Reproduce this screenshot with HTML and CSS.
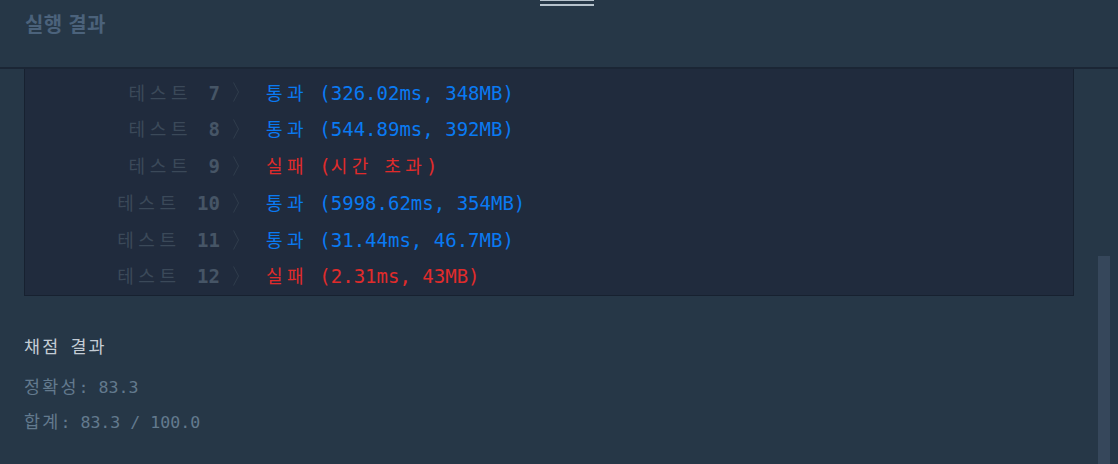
FILE: index.html
```html
<!DOCTYPE html>
<html lang="ko">
<head>
<meta charset="utf-8">
<title>실행 결과</title>
<link rel="stylesheet" href="styles.css">
</head>
<body>
<div class="handle"><span></span><span></span></div>
<header class="header">
  <h2 class="title">실행 결과</h2>
</header>
<main class="scroll">
  <div class="results">
    <div class="row"><span class="label"><span class="ko">테스트</span> <b>7</b></span><svg class="chev" viewBox="0 0 6 20"><polyline points="0.5,0.5 5.5,10 0.5,19.5"/></svg><span class="status pass"><span class="ko">통과</span> (326.02ms, 348MB)</span></div>
    <div class="row"><span class="label"><span class="ko">테스트</span> <b>8</b></span><svg class="chev" viewBox="0 0 6 20"><polyline points="0.5,0.5 5.5,10 0.5,19.5"/></svg><span class="status pass"><span class="ko">통과</span> (544.89ms, 392MB)</span></div>
    <div class="row"><span class="label"><span class="ko">테스트</span> <b>9</b></span><svg class="chev" viewBox="0 0 6 20"><polyline points="0.5,0.5 5.5,10 0.5,19.5"/></svg><span class="status fail"><span class="ko">실패</span> (<span class="ko">시간</span> <span class="ko">초과</span>)</span></div>
    <div class="row"><span class="label"><span class="ko">테스트</span> <b>10</b></span><svg class="chev" viewBox="0 0 6 20"><polyline points="0.5,0.5 5.5,10 0.5,19.5"/></svg><span class="status pass"><span class="ko">통과</span> (5998.62ms, 354MB)</span></div>
    <div class="row"><span class="label"><span class="ko">테스트</span> <b>11</b></span><svg class="chev" viewBox="0 0 6 20"><polyline points="0.5,0.5 5.5,10 0.5,19.5"/></svg><span class="status pass"><span class="ko">통과</span> (31.44ms, 46.7MB)</span></div>
    <div class="row"><span class="label"><span class="ko">테스트</span> <b>12</b></span><svg class="chev" viewBox="0 0 6 20"><polyline points="0.5,0.5 5.5,10 0.5,19.5"/></svg><span class="status fail"><span class="ko">실패</span> (2.31ms, 43MB)</span></div>
  </div>
  <section class="summary">
    <div class="sum-title"><span class="ko2">채점</span> <span class="ko2">결과</span></div>
    <div class="sum-line"><span class="ko2">정확성</span>: 83.3</div>
    <div class="sum-line"><span class="ko2">합계</span>: 83.3 / 100.0</div>
  </section>
  <div class="thumb"></div>
</main>
</body>
</html>
```

FILE: styles.css
```css
html, body {
  margin: 0;
  padding: 0;
  background: #263747;
  height: 100%;
  overflow: hidden;
}

body {
  font-family: "DejaVu Sans Mono", "Noto Sans CJK KR", monospace;
  position: relative;
}

.handle {
  position: absolute;
  left: 540px;
  top: 0;
  width: 54px;
  display: flex;
  flex-direction: column;
  gap: 3px;
}

.handle span {
  display: block;
  height: 2px;
  background: #b6c2cc;
}

.handle span:first-child {
  height: 1px;
}

.header {
  height: 67px;
  border-bottom: 2px solid #1b2635;
  box-sizing: content-box;
  padding: 0 0 0 25px;
}

.title {
  margin: 0;
  padding-top: 11px;
  font-family: "Noto Sans CJK KR", sans-serif;
  font-size: 20px;
  font-weight: 700;
  line-height: 25px;
  color: #4b627b;
  letter-spacing: 0.3px;
}

.scroll {
  position: relative;
  height: calc(100% - 69px);
  padding: 0 44px 0 24px;
}

.results {
  background: #202b3d;
  border: 1px solid #172130;
  border-top: none;
  padding: 5px 0 0 0;
}

.row {
  display: flex;
  align-items: center;
  height: 36.8px;
  line-height: 36.8px;
  font-size: 19px;
  white-space: pre;
}

.label {
  width: 195px;
  text-align: right;
  color: #3b4959;
}

.label b {
  font-weight: 700;
  color: #465566;
}

.ko {
  font-family: "Noto Sans CJK KR", sans-serif;
  font-size: 18px;
  letter-spacing: 4.4px;
}

.label .ko {
  letter-spacing: 4.6px;
  margin-right: 5px;
}

.chev {
  width: 6px;
  height: 20px;
  margin-left: 13px;
  margin-right: 27px;
  fill: none;
  stroke: #303d4c;
  stroke-width: 1;
}

.pass {
  color: #0a7af2;
}

.fail {
  color: #e02b2b;
}

.summary {
  padding-top: 38px;
  font-size: 16.6px;
}

.ko2 {
  font-family: "Noto Sans CJK KR", sans-serif;
  font-size: 17.4px;
  letter-spacing: 2.2px;
}

.sum-title {
  line-height: 24px;
  color: #c3ccd5;
  margin-bottom: 9px;
  white-space: pre;
}

.sum-line {
  line-height: 33px;
  color: #637a8e;
  white-space: pre;
}

.thumb {
  position: absolute;
  left: 1098px;
  top: 187px;
  width: 12px;
  bottom: 0;
  background: #36475b;
}
```
